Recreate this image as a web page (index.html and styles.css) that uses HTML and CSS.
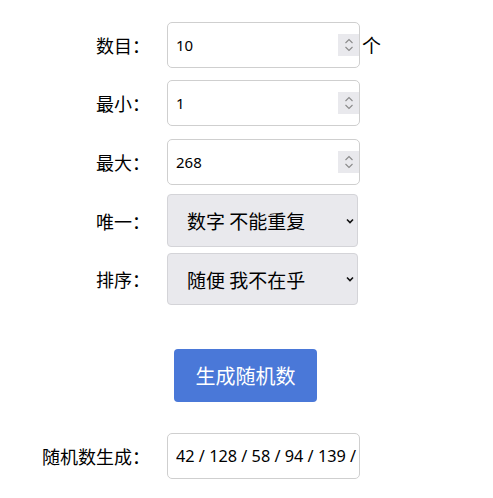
FILE: index.html
```html
<!DOCTYPE html>
<html lang="zh">
<head>
<meta charset="utf-8">
<title>随机数生成器</title>
<link rel="stylesheet" href="styles.css">
</head>
<body>
<div class="form">
  <div class="row row-first">
    <label class="label">数目：</label>
    <div class="field">
      <input class="num" type="text" value="10">
      <span class="spin"><svg width="10" height="16" viewBox="0 0 10 16"><path d="M1.5 6 L5 2.5 L8.5 6 M1.5 10 L5 13.5 L8.5 10" fill="none" stroke="#8a8a8a" stroke-width="1.1"/></svg></span>
    </div>
    <span class="unit">个</span>
  </div>
  <div class="row row-num">
    <label class="label">最小：</label>
    <div class="field">
      <input class="num" type="text" value="1">
      <span class="spin"><svg width="10" height="16" viewBox="0 0 10 16"><path d="M1.5 6 L5 2.5 L8.5 6 M1.5 10 L5 13.5 L8.5 10" fill="none" stroke="#8a8a8a" stroke-width="1.1"/></svg></span>
    </div>
  </div>
  <div class="row row-num3">
    <label class="label">最大：</label>
    <div class="field">
      <input class="num" type="text" value="268">
      <span class="spin"><svg width="10" height="16" viewBox="0 0 10 16"><path d="M1.5 6 L5 2.5 L8.5 6 M1.5 10 L5 13.5 L8.5 10" fill="none" stroke="#8a8a8a" stroke-width="1.1"/></svg></span>
    </div>
  </div>
  <div class="row row-sel1">
    <label class="label">唯一：</label>
    <div class="selectbox">
      <select class="sel"><option>数字 不能重复</option><option>数字 可以重复</option></select>
      <svg class="caret" width="8" height="6" viewBox="0 0 8 6"><path d="M1 1.5 L4 4.5 L7 1.5" fill="none" stroke="#111" stroke-width="1.6"/></svg>
    </div>
  </div>
  <div class="row row-sel2">
    <label class="label">排序：</label>
    <div class="selectbox">
      <select class="sel"><option>随便 我不在乎</option><option>从小到大</option></select>
      <svg class="caret" width="8" height="6" viewBox="0 0 8 6"><path d="M1 1.5 L4 4.5 L7 1.5" fill="none" stroke="#111" stroke-width="1.6"/></svg>
    </div>
  </div>
  <div class="btnrow">
    <button class="btn" type="button">生成随机数</button>
  </div>
  <div class="row row-result">
    <label class="label">随机数生成：</label>
    <div class="field field-result">
      <input class="result" type="text" readonly value="42 / 128 / 58 / 94 / 139 / 201 / 7 / 165 / 33 / 250">
    </div>
  </div>
</div>
</body>
</html>
```

FILE: styles.css
```css
html, body {
  margin: 0;
  padding: 0;
  background: #fff;
}
body {
  font-family: "Noto Sans", "Noto Sans CJK SC", sans-serif;
  color: #000;
}
.form {
  padding-top: 22px;
  display: flex;
  flex-direction: column;
}
.row {
  display: flex;
  align-items: center;
}
.row-num { margin-top: 12px; }
.row-num3 { margin-top: 13px; }
.row-sel1 { margin-top: 9px; }
.row-sel2 { margin-top: 6px; }
.row-result { margin-top: 31px; }
.label {
  width: 150px;
  margin-right: 17px;
  text-align: right;
  font-size: 18px;
  font-family: "Noto Sans CJK SC", sans-serif;
  line-height: 1;
}
.field {
  box-sizing: border-box;
  width: 193px;
  height: 46px;
  border: 1px solid #cfcfcf;
  border-radius: 5px;
  display: flex;
  align-items: center;
  padding-left: 8px;
  overflow: hidden;
  background: #fff;
}
.field-result {
  padding-right: 2px;
}
.num, .result {
  border: none;
  outline: none;
  background: transparent;
  padding: 0;
  margin: 0;
  font-family: "Noto Sans", sans-serif;
  color: #000;
  flex: 1;
  min-width: 0;
}
.num { font-size: 15px; }
.result { font-size: 16.3px; }
.spin {
  width: 21px;
  height: 22px;
  background: #e9e9ed;
  display: flex;
  align-items: center;
  justify-content: center;
}
.unit {
  font-size: 19px;
  font-family: "Noto Sans CJK SC", sans-serif;
  margin-left: 2px;
  line-height: 1;
  margin-top: -2px;
}
.selectbox {
  box-sizing: border-box;
  width: 191px;
  height: 53px;
  background: #e9e9ed;
  border: 1px solid #d4d4d8;
  border-radius: 4px;
  display: flex;
  align-items: center;
  padding-right: 3px;
}
.row-sel2 .selectbox { height: 52px; }
.sel {
  appearance: none;
  -webkit-appearance: none;
  border: none;
  outline: none;
  background: transparent;
  flex: 1;
  min-width: 0;
  height: 100%;
  padding: 0 0 0 19px;
  margin: 0;
  font-size: 19px;
  font-family: "Noto Sans CJK SC", sans-serif;
  color: #000;
}
.caret { flex: none; }
.btnrow {
  display: flex;
  justify-content: center;
  margin-top: 44px;
  padding-right: 2px;
}
.btn {
  width: 143px;
  height: 53px;
  border: none;
  border-radius: 4px;
  background: #4a78d8;
  color: #fff;
  font-size: 20px;
  font-family: "Noto Sans CJK SC", sans-serif;
  padding: 0;
}
```
